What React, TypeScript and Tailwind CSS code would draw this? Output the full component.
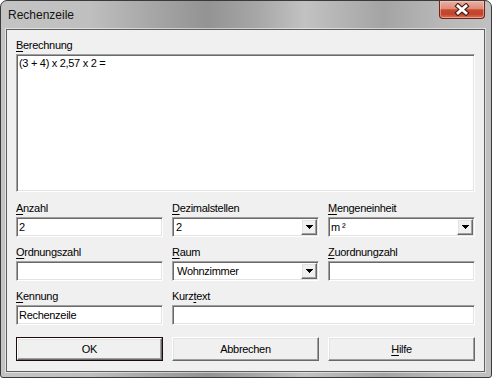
import React from 'react';

const sunken =
  'bg-white border border-t-[#a0a0a0] border-l-[#a0a0a0] border-r-white border-b-white shadow-[inset_1px_1px_0_#696969,inset_-1px_-1px_0_#e3e3e3]';
const raised =
  'bg-[#f0f0f0] border border-t-white border-l-white border-r-[#696969] border-b-[#696969] shadow-[inset_-1px_-1px_0_#a0a0a0,inset_1px_1px_0_#e3e3e3]';

const U: React.FC<{ children: React.ReactNode }> = ({ children }) => (
  <span className="underline underline-offset-[2px] decoration-1">{children}</span>
);

const Field: React.FC<{ label: React.ReactNode; children: React.ReactNode; className?: string }> = ({ label, children, className }) => (
  <div className={className}>
    <div className="h-[14px] leading-[14px] mb-[2px]">{label}</div>
    {children}
  </div>
);

const TextBox: React.FC<{ value?: string }> = ({ value }) => (
  <div className={`${sunken} h-[20px] flex items-center pl-[2px]`}>{value}</div>
);

const Arrow = () => (
  <svg width="7" height="4" viewBox="0 0 7 4">
    <rect x="0" y="0" width="7" height="1" fill="#000" />
    <rect x="1" y="1" width="5" height="1" fill="#000" />
    <rect x="2" y="2" width="3" height="1" fill="#000" />
    <rect x="3" y="3" width="1" height="1" fill="#000" />
  </svg>
);

const Combo: React.FC<{ value: React.ReactNode; pad: string }> = ({ value, pad }) => (
  <div className={`${sunken} h-[20px] flex items-center pr-[1px]`}>
    <span className={`flex-1 ${pad}`}>{value}</span>
    <div className={`${raised} w-[16px] h-[16px] flex items-center justify-center`}>
      <Arrow />
    </div>
  </div>
);

export default function App() {
  return (
    <div className="w-[492px] h-[378px] font-['Liberation_Sans',Arial,sans-serif] text-[11px] tracking-[-0.3px] text-black">
      <div className="w-full h-full flex flex-col border border-[#3a3a3a] rounded-t-[7px] rounded-b-[3px] overflow-hidden bg-[linear-gradient(90deg,#c4c4c4_0%,#bfbfbf_18%,#a8a8a8_30%,#939393_42%,#a6a6a6_52%,#c2c2c2_62%,#a4a4a4_78%,#b8b8b8_90%,#c0c0c0_100%)]">
        {/* Title bar */}
        <div className="h-[27px] flex items-start shrink-0">
          <span className="pl-[7px] pt-[6px] text-[12px] leading-[16px] tracking-normal text-[#141414]">Rechenzeile</span>
          <div className="ml-auto mr-[6px] w-[46px] h-[18px] rounded-b-[4px] border border-t-0 border-[#6e2418] bg-[linear-gradient(180deg,#eab0a2_0%,#de8c78_45%,#c64a30_52%,#c3432a_78%,#db7559_100%)] shadow-[inset_0_0_0_1px_rgba(255,220,210,0.45)] flex items-center justify-center">
            <svg width="16" height="13" viewBox="0 0 16 13">
              <path d="M4 3 L12 10 M12 3 L4 10" stroke="#4a1c14" strokeWidth="5" strokeLinecap="square" />
              <path d="M4 3 L12 10 M12 3 L4 10" stroke="#ffffff" strokeWidth="2.8" strokeLinecap="square" />
            </svg>
          </div>
        </div>

        {/* Client */}
        <div className="ml-[4px] mr-[5px] h-[345px] border border-white/50">
          <div className="h-full border border-[#5f5f5f] bg-[#f0f0f0] pt-[8px] pl-[9px]">
            <div className="w-[459px]">
              <Field label={<><U>B</U>erechnung</>}>
                <div className={`${sunken} h-[138px] mt-[1px] pl-[2px] pt-[1px] leading-[14px]`}>(3 + 4) x 2,57 x 2 =</div>
              </Field>

              <div className="grid grid-cols-[147px_147px_147px] gap-x-[9px] gap-y-[8px] mt-[9px]">
                <Field label={<><U>A</U>nzahl</>}>
                  <TextBox value="2" />
                </Field>
                <Field label={<><U>D</U>ezimalstellen</>}>
                  <Combo value="2" pad="pl-[3px]" />
                </Field>
                <Field label={<><U>M</U>engeneinheit</>}>
                  <Combo value={<>m<span className="ml-[2px]">²</span></>} pad="pl-[2px]" />
                </Field>

                <Field label={<><U>O</U>rdnungszahl</>}>
                  <TextBox />
                </Field>
                <Field label={<><U>R</U>aum</>}>
                  <Combo value="Wohnzimmer" pad="pl-[4px]" />
                </Field>
                <Field label={<><U>Z</U>uordnungzahl</>}>
                  <TextBox />
                </Field>

                <Field label={<><U>K</U>ennung</>}>
                  <TextBox value="Rechenzeile" />
                </Field>
                <Field label={<>Kurz<U>t</U>ext</>} className="col-span-2">
                  <TextBox />
                </Field>
              </div>

              <div className="grid grid-cols-[147px_147px_147px] gap-x-[9px] mt-[12px]">
                <div className="border border-[#1b0b0b] h-[24px]">
                  <div className={`${raised} h-full flex items-center justify-center`}>OK</div>
                </div>
                <div className={`${raised} h-[24px] flex items-center justify-center`}>Abbrechen</div>
                <div className={`${raised} h-[24px] flex items-center justify-center`}>
                  <span><U>H</U>ilfe</span>
                </div>
              </div>
            </div>
          </div>
        </div>
      </div>
    </div>
  );
}
